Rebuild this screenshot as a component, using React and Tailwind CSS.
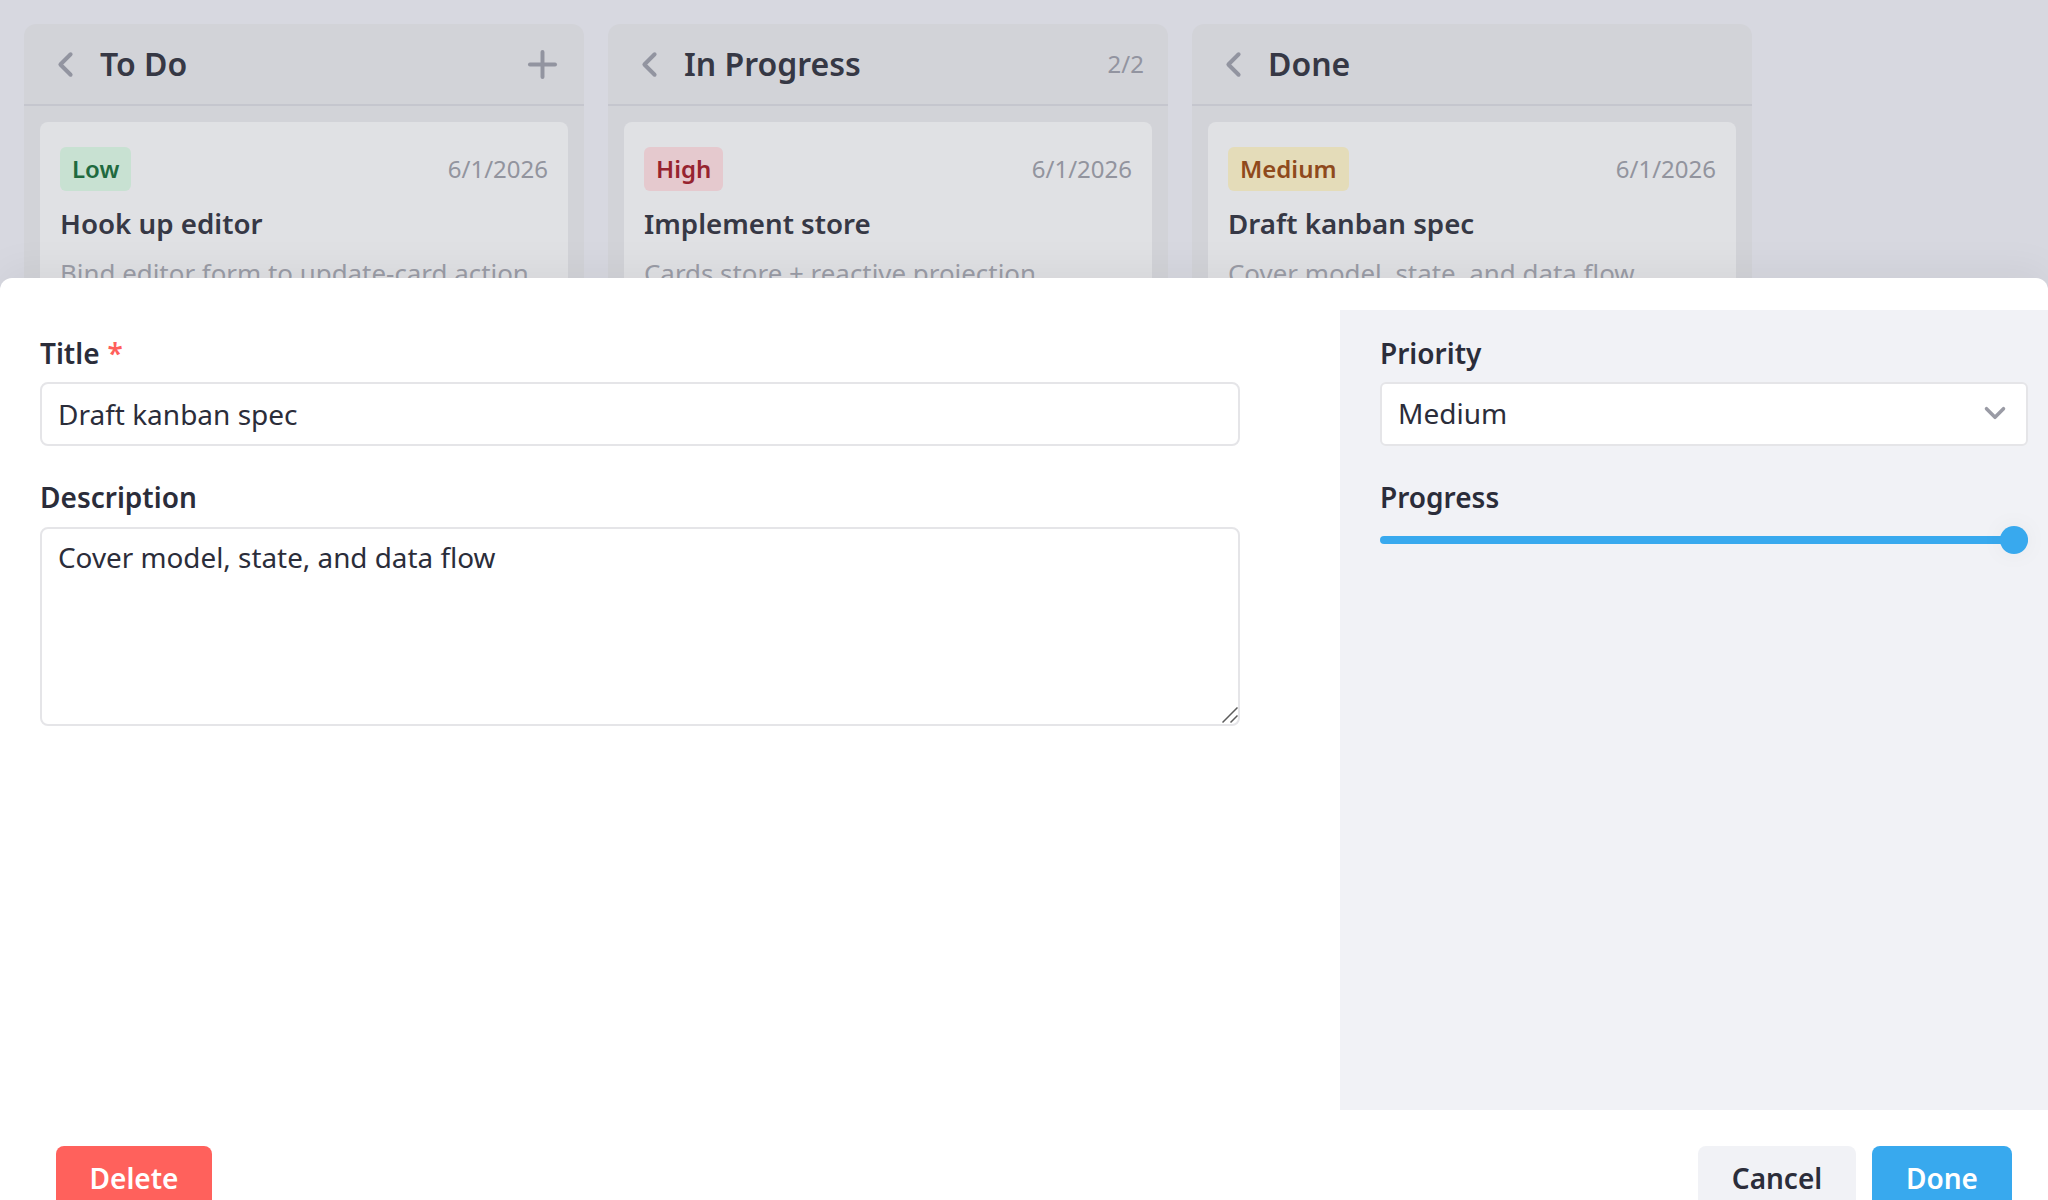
import { ChevronDown, ChevronLeft, Plus } from 'lucide-react'

const COLUMNS = [
  {
    name: 'To Do',
    action: 'plus',
    card: {
      tag: 'Low',
      tagClass: 'bg-[#c8e1d2] text-[#1f6a3f]',
      title: 'Hook up editor',
      desc: 'Bind editor form to update-card action',
    },
  },
  {
    name: 'In Progress',
    action: '2/2',
    card: {
      tag: 'High',
      tagClass: 'bg-[#e5c9ce] text-[#96232f]',
      title: 'Implement store',
      desc: 'Cards store + reactive projection',
    },
  },
  {
    name: 'Done',
    card: {
      tag: 'Medium',
      tagClass: 'bg-[#e4dcb9] text-[#8f4a1c]',
      title: 'Draft kanban spec',
      desc: 'Cover model, state, and data flow',
    },
  },
]

const LABEL = 'flex h-[38px] items-center text-[28px] font-semibold text-[#2b2d3a]'

function Column({ name, action, card }) {
  return (
    <section className="flex h-[400px] w-[560px] shrink-0 flex-col rounded-t-xl bg-[#d2d3d8]">
      <header className="flex h-[82px] shrink-0 items-center border-b-2 border-[#c5c6ce] pr-5 pl-[21px]">
        <ChevronLeft className="h-[41px] w-[41px] text-[#9294a0]" strokeWidth={2.3} />
        <h2 className="ml-[14px] flex-1 text-[32px] leading-none font-semibold text-[#363845]">{name}</h2>
        {action === 'plus' && <Plus className="h-[43px] w-[43px] text-[#9294a0]" strokeWidth={2.2} />}
        {action && action !== 'plus' && <span className="mr-1 text-2xl text-[#9294a0]">{action}</span>}
      </header>
      <article className="mx-4 mt-4 rounded-lg bg-[#e0e1e4] px-5 pt-[25px]">
        <div className="flex items-center justify-between">
          <span className={`flex h-[44px] items-center rounded-md px-3 text-2xl font-semibold ${card.tagClass}`}>{card.tag}</span>
          <span className="text-2xl text-[#92949e]">6/1/2026</span>
        </div>
        <h3 className="mt-3 text-[27.7px] leading-[40px] font-semibold whitespace-nowrap text-[#363845]">{card.title}</h3>
        <p className="mt-3 text-[25.9px] leading-[36px] whitespace-nowrap text-[#9a9ca6]">{card.desc}</p>
      </article>
    </section>
  )
}

export default function App() {
  return (
    <div className="relative h-[1200px] w-[2048px] overflow-hidden bg-[#d7d8e0] font-['Noto_Sans',sans-serif]">
      <div className="flex gap-6 pt-6 pl-6">
        {COLUMNS.map((col) => (
          <Column key={col.name} {...col} />
        ))}
      </div>

      <div className="absolute inset-x-0 top-[278px] h-[1000px] rounded-t-xl bg-white shadow-[0_-8px_40px_rgba(0,0,0,0.05)]">
        <div className="mt-8 flex h-[800px]">
          <div className="w-[1340px] shrink-0 pt-6 pl-10">
            <label className={LABEL}>
              Title <span className="ml-2 text-[#ff5f5b]">*</span>
            </label>
            <input
              readOnly
              value="Draft kanban spec"
              className="mt-[10px] block h-[64px] w-[1200px] rounded-lg border-2 border-[#e5e5e8] px-4 text-[28px] text-[#2b2d3a] outline-none"
            />
            <label className={`mt-8 ${LABEL}`}>Description</label>
            <div className="relative mt-[11px] h-[199px] w-[1200px]">
              <textarea
                readOnly
                value="Cover model, state, and data flow"
                className="block h-full w-full resize-none rounded-lg border-2 border-[#e5e5e8] px-4 pt-[9px] text-[27.85px] leading-[38px] text-[#2b2d3a] outline-none"
              />
              <svg className="absolute right-[2px] bottom-[3px] h-4 w-4" viewBox="0 0 16 16" fill="none" stroke="#5c5c5c" strokeWidth="1.5">
                <path d="M0.5 15.5 15.5 0.5M8.5 15.5 15.5 8.5" />
              </svg>
            </div>
          </div>

          <aside className="flex-1 bg-[#f1f2f6] pt-6 pl-10">
            <label className={LABEL}>Priority</label>
            <div className="mt-[10px] flex h-[64px] w-[648px] items-center justify-between rounded-md border-2 border-[#e5e5e8] bg-white pr-[14px] pb-[2px] pl-4 text-[28px] text-[#2b2d3a]">
              Medium
              <ChevronDown className="h-[34px] w-[34px] text-[#9a9ba5]" strokeWidth={2.5} />
            </div>
            <label className={`mt-8 ${LABEL}`}>Progress</label>
            <div className="relative mt-5 h-2 w-[648px] rounded-full bg-[#38a9ee]">
              <span className="absolute top-1/2 right-0 h-7 w-7 -translate-y-1/2 rounded-full bg-[#38a9ee] shadow-[0_0_24px_rgba(0,0,0,0.05)]" />
            </div>
          </aside>
        </div>

        <footer className="mt-9 flex items-start justify-between pr-[36px] pl-14">
          <button className="h-[64px] w-[156px] rounded-lg bg-[#ff615c] text-[28px] font-semibold text-white">Delete</button>
          <div className="flex gap-4">
            <button className="h-[64px] w-[158px] rounded-lg bg-[#f1f2f6] text-[28px] font-semibold text-[#2b2d3a]">Cancel</button>
            <button className="h-[64px] w-[140px] rounded-lg bg-[#38a9ee] text-[28px] font-semibold text-white">Done</button>
          </div>
        </footer>
      </div>
    </div>
  )
}
